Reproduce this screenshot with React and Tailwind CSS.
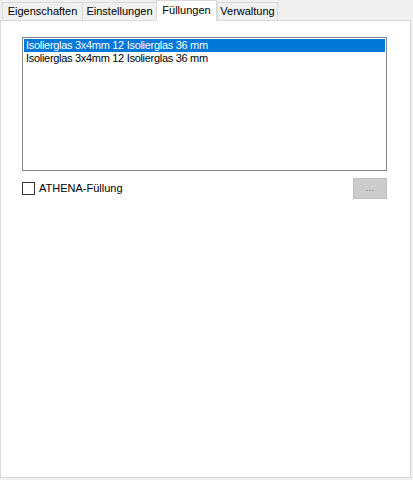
import React from 'react';

const tabs = [
  { label: 'Eigenschaften', w: 'w-[80px]' },
  { label: 'Einstellungen', w: 'w-[74px]' },
  { label: 'Füllungen', w: 'w-[61px]', active: true },
  { label: 'Verwaltung', w: 'w-[61px]' },
];

const rows = [
  'Isolierglas 3x4mm 12 Isolierglas 36 mm',
  'Isolierglas 3x4mm 12 Isolierglas 36 mm',
];

function App() {
  return (
    <div className="w-[413px] h-[480px] bg-[#f0f0f0] text-[11px] text-black font-['Liberation_Sans',Arial,sans-serif] leading-none">
      <div className="flex items-end h-[20px] pl-[2px]">
        {tabs.map((t, i) =>
          t.active ? (
            <div
              key={t.label}
              className={`${t.w} h-[21px] -mb-px relative z-10 bg-white border border-b-0 border-[#d9d9d9] flex items-center justify-center pb-[2px]`}
            >
              {t.label}
            </div>
          ) : (
            <div
              key={t.label}
              className={`${t.w} h-[18px] bg-[#f0f0f0] border-t border-l border-[#d9d9d9] ${i === tabs.length - 1 ? 'border-r' : ''} flex items-center justify-center`}
            >
              {t.label}
            </div>
          )
        )}
      </div>

      <div className="w-[411px] h-[458px] bg-white border border-[#d9d9d9] pl-[21px] pt-[16px]">
        <div className="w-[365px] h-[134px] border border-[#828790] p-px">
          {rows.map((r, i) => (
            <div
              key={i}
              className={`h-[13px] flex items-center pl-[2px] tracking-[-0.3px] ${i === 0 ? 'bg-[#0078d7] text-white' : ''}`}
            >
              {r}
            </div>
          ))}
        </div>

        <div className="w-[365px] h-[21px] mt-[7px] flex items-center">
          <div className="w-[13px] h-[13px] border border-[#333333] bg-white" />
          <span className="ml-[4px]">ATHENA-Füllung</span>
          <div className="ml-auto w-[34px] h-[21px] bg-[#cccccc] border border-[#bfbfbf] flex items-center justify-center text-[#838383] pb-[3px]">
            ...
          </div>
        </div>
      </div>
    </div>
  );
}

export default App;
